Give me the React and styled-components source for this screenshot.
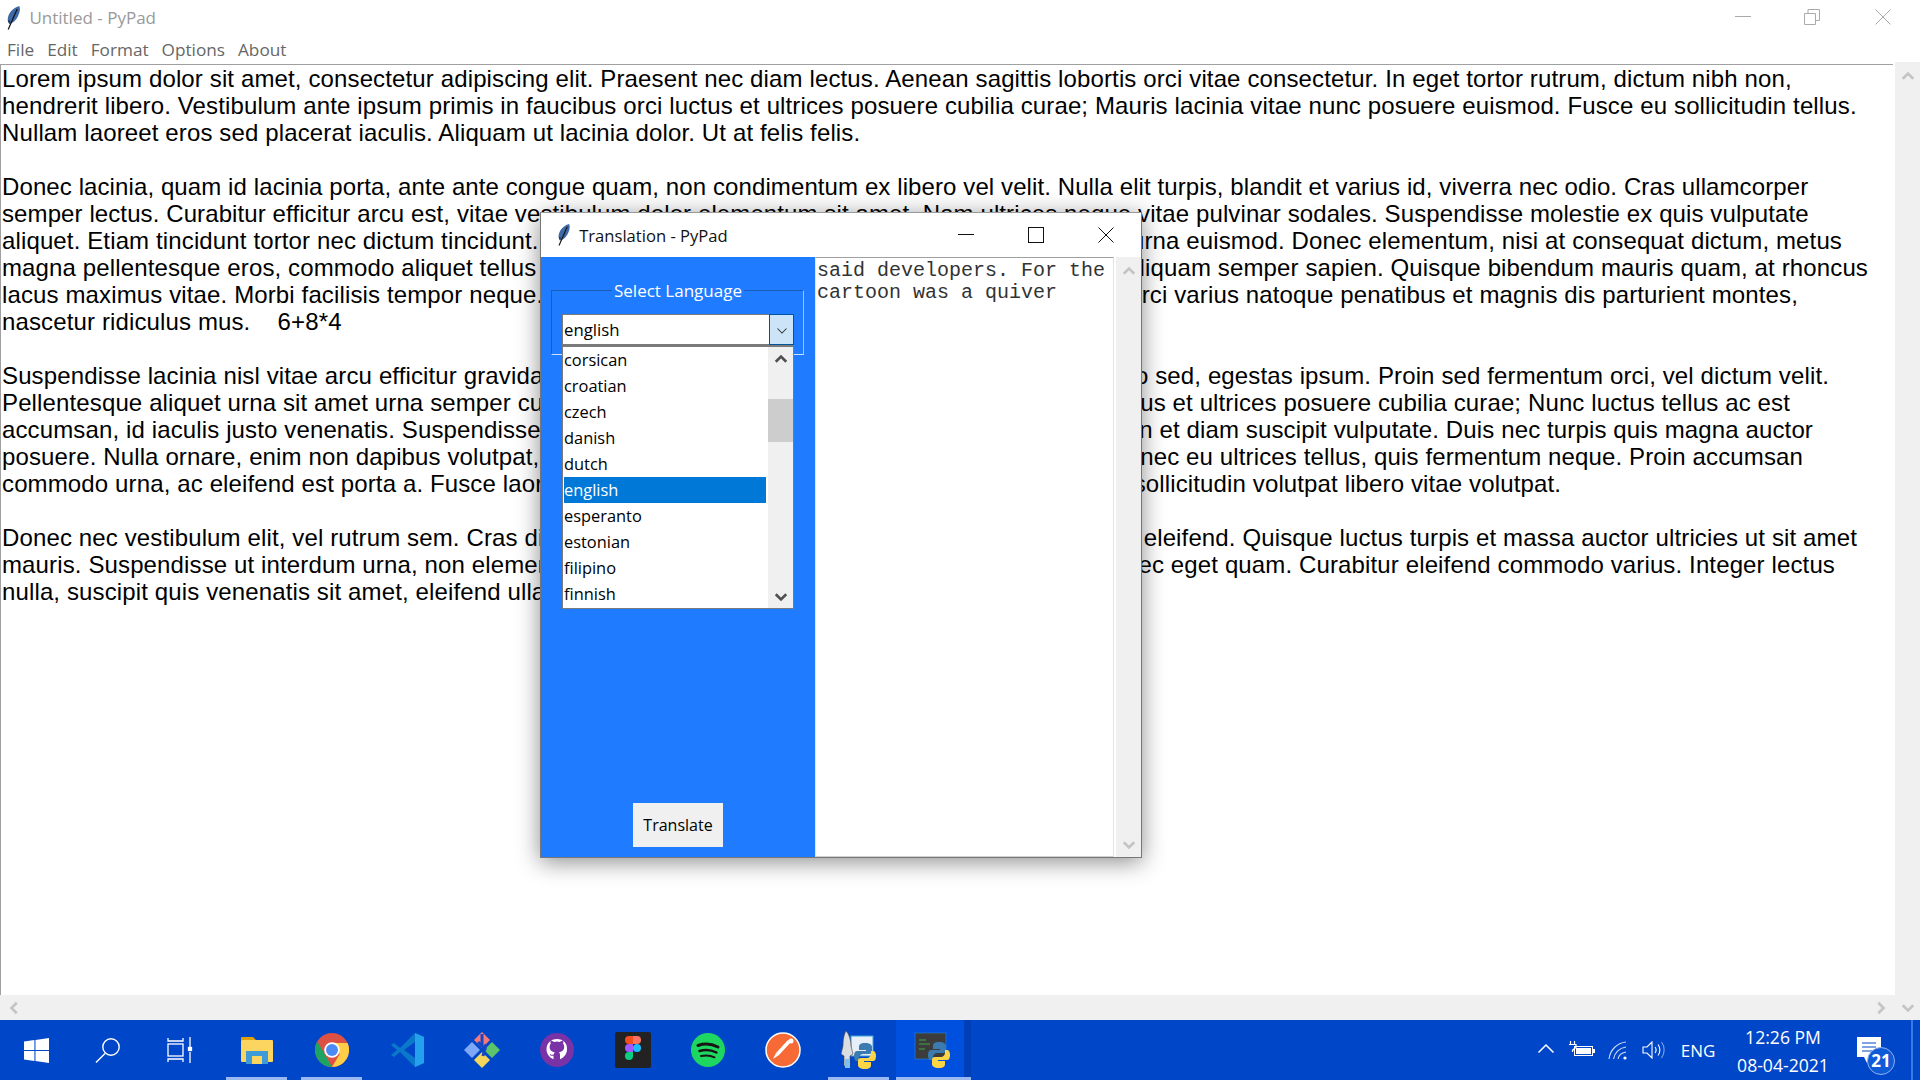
import React from 'react';
import styled, { createGlobalStyle } from 'styled-components';

const Global = createGlobalStyle`
  html, body { margin: 0; padding: 0; overflow: hidden; background: #fff; }
  * { box-sizing: border-box; }
`;

const UI = `"Open Sans", "Noto Sans", sans-serif`;

const Screen = styled.div`
  position: relative;
  width: 1920px;
  height: 1080px;
  display: flex;
  flex-direction: column;
  overflow: hidden;
  background: #fff;
`;

const TitleBar = styled.div`
  height: 33px;
  flex: none;
  display: flex;
  align-items: center;
  padding: 2px 0 0 6px;
  font: 17px ${UI};
  color: #999;
`;
const TitleText = styled.span`
  margin-left: ${p => p.$gap || 9}px;
  flex: 1;
`;
const WinControls = styled.div`
  display: flex;
  gap: 53px;
  margin-top: -2px;
  padding-right: 29px;
  color: #aaa;
  & > :nth-child(2) { margin-right: 2px; }
`;
const DialogControls = styled.div`
  display: flex;
  gap: 54px;
  padding-right: 27px;
  color: #111;
`;

const MenuBar = styled.div`
  height: 31px;
  flex: none;
  display: flex;
  align-items: center;
  gap: 13px;
  padding: 1px 0 0 7px;
  font: 17.2px ${UI};
  color: #666;
`;

const Workspace = styled.div`
  flex: 1;
  min-height: 0;
  display: flex;
`;
const EditorCol = styled.div`
  flex: 1;
  min-width: 0;
  display: flex;
  flex-direction: column;
`;
const Editor = styled.div`
  flex: 1;
  min-height: 0;
  margin-right: 2px;
  border-top: 1px solid #a0a0a0;
  border-left: 1px solid #a0a0a0;
  padding: 0 0 0 1px;
  font: 24px/27px "Liberation Sans", Arial, sans-serif;
  color: #000;
  white-space: pre;
  overflow: hidden;
`;
const Line = styled.div`
  height: 27px;
  display: flex;
  justify-content: space-between;
  letter-spacing: ${p => p.$ls || 0.13}px;
  width: ${p => (p.$end ? `${p.$end - 2}px` : 'auto')};
`;
const HScroll = styled.div`
  height: 25px;
  flex: none;
  background: #f0f0f0;
  display: flex;
  align-items: center;
  justify-content: space-between;
  padding: 0 8px;
  color: #c4c4c4;
`;
const VScroll = styled.div`
  width: 25px;
  flex: none;
  margin-top: ${p => p.$top || 0}px;
  background: #f0f0f0;
  display: flex;
  flex-direction: column;
  align-items: center;
  justify-content: space-between;
  padding: 8px 0 6px;
  color: #c4c4c4;
`;

const Taskbar = styled.div`
  height: 60px;
  flex: none;
  background: #0046c8;
  display: flex;
  align-items: stretch;
  color: #fff;
`;
const SysButton = styled.div`
  width: 72px;
  display: flex;
  align-items: center;
  justify-content: center;
`;
const AppList = styled.div`
  margin-left: 3px;
  display: flex;
`;
const AppTile = styled.div`
  position: relative;
  width: 75.2px;
  display: flex;
  align-items: center;
  justify-content: center;
  background: ${p => (p.$active ? '#0050e0' : 'transparent')};
  &::before {
    content: '';
    display: ${p => (p.$active ? 'block' : 'none')};
    position: absolute;
    top: 0;
    right: 0;
    bottom: 0;
    width: 7px;
    background: #003fb8;
  }
  &::after {
    content: '';
    display: ${p => (p.$open ? 'block' : 'none')};
    position: absolute;
    left: ${p => (p.$active ? 0 : 7)}px;
    right: ${p => (p.$active ? 0 : 7)}px;
    bottom: 0;
    height: 3px;
    background: #99b9f0;
  }
`;
const Tray = styled.div`
  margin-left: auto;
  display: flex;
  align-items: center;
  font: 17px ${UI};
  padding-right: 7px;
`;
const TrayIcon = styled.div`
  width: ${p => p.$w}px;
  display: flex;
  justify-content: center;
  align-items: center;
`;
const Clock = styled.div`
  width: 118px;
  margin-top: 2px;
  text-align: center;
  line-height: 28px;
  font-size: 17.6px;
`;
const Notify = styled.div`
  position: relative;
  width: 71px;
  height: 60px;
  padding: 2px 15px 0 0;
  display: flex;
  justify-content: center;
  align-items: center;
  border-right: 2px solid #3d78e0;
`;
const NotifyBadge = styled.span`
  position: absolute;
  left: 25px;
  top: 27px;
  width: 28px;
  height: 28px;
  border-radius: 50%;
  background: #0f5ad6;
  border: 1px solid #8fb2ef;
  font: 700 17px/26px ${UI};
  text-align: center;
`;

const Dialog = styled.div`
  position: absolute;
  left: 540px;
  top: 212px;
  width: 602px;
  height: 646px;
  display: flex;
  flex-direction: column;
  background: #fff;
  border: 1px solid #777;
  border-top-color: #999;
  box-shadow: 0 4px 22px rgba(0, 0, 0, 0.45);
`;
const DialogTitle = styled.div`
  height: 44px;
  flex: none;
  display: flex;
  align-items: center;
  padding-left: 16px;
  font: 16.6px ${UI};
  color: #111;
`;
const DialogBody = styled.div`
  flex: 1;
  min-height: 0;
  display: flex;
`;
const Sidebar = styled.div`
  width: 274px;
  flex: none;
  background: #1f7bff;
  padding: 33px 10px 10px;
  display: flex;
  flex-direction: column;
`;
const Group = styled.div`
  position: relative;
  height: 65px;
  width: 253px;
  border: 1px solid #1a5cba;
  border-bottom-color: #cfe2ff;
  border-right-color: #9cc3ff;
`;
const Legend = styled.span`
  position: absolute;
  left: 60px;
  top: -11px;
  padding: 0 2px;
  background: #1f7bff;
  color: #fff;
  font: 17px/22px ${UI};
  white-space: nowrap;
`;
const DropArea = styled.div`
  position: absolute;
  left: 10px;
  top: 23px;
  width: 232px;
`;
const Combo = styled.div`
  height: 32px;
  display: flex;
  background: #fff;
  border: 1px solid #7a7a7a;
  border-bottom-width: 2px;
  font: 16.8px/30px ${UI};
  color: #000;
  padding-left: 1px;
`;
const ComboValue = styled.span`
  flex: 1;
`;
const ComboButton = styled.span`
  width: 25px;
  background: #cce4f7;
  border: 1px solid #005499;
  margin: -1px -1px -1px 0;
  display: flex;
  align-items: center;
  justify-content: center;
  color: #333;
`;
const ListBox = styled.div`
  height: 263px;
  display: flex;
  background: #fff;
  border: 1px solid #7a7a7a;
  font: 16.4px/26px ${UI};
  color: #000;
`;
const Options = styled.div`
  flex: 1;
  padding-left: 1px;
`;
const OptionRow = styled.div`
  height: 26px;
  background: ${p => (p.$selected ? '#0078d7' : 'transparent')};
  color: ${p => (p.$selected ? '#fff' : '#000')};
`;
const ListScroll = styled.div`
  position: relative;
  width: 25px;
  flex: none;
  margin-left: 2px;
  background: #f0f0f0;
  display: flex;
  flex-direction: column;
  justify-content: space-between;
  align-items: center;
  padding: 6px 0 5px;
  color: #505050;
`;
const Thumb = styled.div`
  position: absolute;
  left: 0;
  right: 0;
  top: 52px;
  height: 43px;
  background: #cdcdcd;
`;
const TranslateButton = styled.button`
  margin: auto 0 0 82px;
  width: 90px;
  height: 44px;
  border: 0;
  background: #f0f0f0;
  color: #000;
  font: 16px ${UI};
`;
const TextPane = styled.div`
  flex: 1;
  border-top: 1px solid #a0a0a0;
  border-left: 1px solid #e6e6e6;
  border-right: 1px solid #e3e3e3;
  border-bottom: 1px solid #d0d0d0;
  margin-right: 2px;
  padding: 2px 0 0 1px;
  font: 20px/22px "Liberation Mono", "Courier New", monospace;
  color: #333;
  white-space: pre;
`;

const Chevron = ({ dir = 'up', size = 14, weight = 3 }) => {
  const pts = {
    up: '2,10 8,4 14,10',
    down: '2,6 8,12 14,6',
    left: '10,2 4,8 10,14',
    right: '6,2 12,8 6,14',
  }[dir];
  return (
    <svg width={size} height={size} viewBox="0 0 16 16">
      <polyline points={pts} fill="none" stroke="currentColor" strokeWidth={weight} />
    </svg>
  );
};

const Feather = ({ size = 22 }) => (
  <svg width={size * 0.6} height={size} viewBox="0 0 14 24">
    <path d="M13 0C6 2 1.500 8 1.500 14L3 18C8 17 11.500 12 13 7C14 4 14 2 13 0Z" fill="#3f6aa8" />
    <path d="M11 3 L2 23.500" stroke="#111" strokeWidth="1.200" />
    <path d="M4 15 L3 18 L1.500 14Z" fill="#1c2a3f" />
  </svg>
);

const Minimize = () => (
  <svg width="16" height="16" viewBox="0 0 16 16"><path d="M0 7.500H16" stroke="currentColor" fill="none" /></svg>
);
const Restore = () => (
  <svg width="16" height="16" viewBox="0 0 16 16">
    <path d="M.5 4.500h11v11H.5zM4 4.500V.5h11.500v11H11.500" stroke="currentColor" fill="none" />
  </svg>
);
const Maximize = () => (
  <svg width="16" height="16" viewBox="0 0 16 16"><rect x=".5" y=".5" width="15" height="15" stroke="currentColor" fill="none" /></svg>
);
const Close = () => (
  <svg width="16" height="16" viewBox="0 0 16 16"><path d="M.5.5l15 15M15.500.5l-15 15" stroke="currentColor" fill="none" /></svg>
);

const WindowsLogo = () => (
  <svg width="25" height="25" viewBox="0 0 24 24" fill="#fff">
    <path d="M0 3.400L10 2v9.400H0zM11 1.900L24 0v11.400H11zM0 12.500h10V22L0 20.600zM11 12.500h13V24l-13-1.900z" />
  </svg>
);
const SearchIcon = () => (
  <svg width="26" height="26" viewBox="0 0 26 26" fill="none" stroke="#fff" strokeWidth="1.400">
    <circle cx="16" cy="10" r="8.200" />
    <path d="M10 16.500L1 25.500" />
  </svg>
);
const TaskView = () => (
  <svg width="26" height="26" viewBox="0 0 26 26" fill="none" stroke="#fff" strokeWidth="1.300">
    <path d="M1 1v3h15V1M1 25v-3h15v3" />
    <rect x="1" y="7" width="15" height="12" />
    <path d="M23 0v10M23 15v11" />
    <rect x="21.500" y="10.500" width="3" height="3" fill="#fff" />
  </svg>
);
const ExplorerIcon = () => (
  <svg width="34" height="28" viewBox="0 0 34 28">
    <path d="M1 2a1 1 0 0 1 1-1h11l3 3H1z" fill="#e0a008" />
    <rect x="1" y="4" width="32" height="22" rx="1" fill="#fbd55f" />
    <rect x="6" y="15" width="22" height="13" fill="#3f9ad8" />
    <rect x="12" y="20" width="10" height="8" fill="#fbd55f" />
  </svg>
);
const ChromeIcon = () => (
  <svg width="34" height="34" viewBox="0 0 48 48">
    <circle cx="24" cy="24" r="24" fill="#dd5044" />
    <path d="M24 48A24 24 0 0 1 3.200 12L14 30.500 24 48z" fill="#1da462" />
    <path d="M24 48l11-18.500L24 14h22a24 24 0 0 1-22 34z" fill="#ffcd46" />
    <circle cx="24" cy="24" r="11" fill="#fff" />
    <circle cx="24" cy="24" r="8.500" fill="#4c8bf5" />
  </svg>
);
const VSCodeIcon = () => (
  <svg width="36" height="36" viewBox="0 0 36 36">
    <path d="M26 1l9 4v26l-9 4L11 20l-6 5-3-2 6-5-6-5 3-2 6 5z" fill="#0a79c9" />
    <path d="M26 1l9 4v26l-9 4z" fill="#24a0ed" />
    <path d="M26 10L15 18l11 8z" fill="#0046c8" />
  </svg>
);
const KrakenIcon = () => (
  <svg width="36" height="36" viewBox="0 0 36 36">
    <path d="M18 0l8 8-8 8-8-8z" fill="#f77a7a" />
    <path d="M8 10l8 8-8 8-8-8z" fill="#7fa9f7" />
    <path d="M28 10l8 8-8 8-8-8z" fill="#5cc46a" />
    <path d="M18 20l8 8-8 8-8-8z" fill="#f5d55a" />
    <path d="M18 2v13M14 10l8 8M22 12l-3 12" stroke="#1746c4" strokeWidth="3" fill="none" />
  </svg>
);
const GithubIcon = () => (
  <svg width="34" height="34" viewBox="0 0 34 34">
    <circle cx="17" cy="17" r="17" fill="#7a33a6" />
    <path d="M17 6c-6.300 0-10.500 4.500-10.500 10.300 0 4.600 3 8.500 7 9.900v-3.500c-2.800.6-3.500-1-3.800-2 2 1.500 3 1.400 4.100.5.200-1 .5-1.500 1-1.900-2.700-.4-5.200-1.600-5.200-5.500 0-1.200.4-2.200 1.100-3-.1-.3-.5-1.500.1-3 0 0 1-.3 3.200 1.200a11 11 0 0 1 5.800 0c2.200-1.500 3.200-1.200 3.200-1.200.6 1.500.2 2.700.1 3 .7.800 1.100 1.800 1.100 3 0 3.900-2.500 5.100-5.200 5.500.5.500 1 1.200 1 2.500v4.400c4-1.400 7-5.300 7-9.900C27.500 10.500 23.300 6 17 6z" fill="#fff" />
  </svg>
);
const FigmaIcon = () => (
  <svg width="36" height="36" viewBox="0 0 36 36">
    <rect width="36" height="36" rx="2" fill="#222" />
    <path d="M10 8a4 4 0 0 1 4-4h4v8h-4a4 4 0 0 1-4-4z" fill="#f24e1e" />
    <path d="M18 4h4a4 4 0 0 1 0 8h-4z" fill="#ff7262" />
    <path d="M10 16a4 4 0 0 1 4-4h4v8h-4a4 4 0 0 1-4-4z" fill="#a259ff" />
    <circle cx="22" cy="16" r="4" fill="#1abcfe" />
    <path d="M10 24a4 4 0 0 1 4-4h4v4a4 4 0 0 1-8 0z" fill="#0acf83" />
  </svg>
);
const SpotifyIcon = () => (
  <svg width="34" height="34" viewBox="0 0 34 34">
    <circle cx="17" cy="17" r="17" fill="#1ed760" />
    <g fill="none" stroke="#191414" strokeLinecap="round">
      <path d="M7 12.500c6-2 14-1.500 20 1.500" strokeWidth="3" />
      <path d="M8.500 18c5-1.500 12-1 17 1.500" strokeWidth="2.500" />
      <path d="M10 23c4.500-1 9.500-.7 13.500 1.300" strokeWidth="2" />
    </g>
  </svg>
);
const PostmanIcon = () => (
  <svg width="36" height="36" viewBox="0 0 36 36">
    <circle cx="18" cy="18" r="17" fill="#f76935" stroke="#fff" strokeWidth="1.500" />
    <path d="M8 27l6-4 12-13-3-2-12 13z" fill="#fff" />
    <circle cx="26" cy="9" r="2.500" fill="#fff" />
  </svg>
);
const PythonMark = ({ x = 0, y = 0 }) => (
  <g transform={`translate(${x} ${y})`}>
    <path d="M11 0c-5 0-6 2-6 4v3h7v1H3c-2 0-3 2-3 5s1 5 3 5h2v-3c0-2 2-4 4-4h6c2 0 3-1 3-3V4c0-2-2-4-7-4z" fill="#3b7bb0" />
    <path d="M11 26c5 0 6-2 6-4v-3h-7v-1h9c2 0 3-2 3-5s-1-5-3-5h-2v3c0 2-2 4-4 4H7c-2 0-3 1-3 3v4c0 2 2 4 7 4z" fill="#fdd545" />
  </g>
);
const RocketPy = () => (
  <svg width="38" height="38" viewBox="0 0 38 38">
    <rect x="12" y="5" width="22" height="20" fill="#e6eef8" stroke="#3aa0d8" />
    <path d="M7 0c3 3 5 9 5 15l2 8-3 2v10H5V25l-3-2 2-8C4 9 5 3 7 0z" fill="#d9dde2" stroke="#444" strokeWidth=".6" />
    <rect x="6" y="28" width="5" height="9" fill="#7ec0f0" />
    <PythonMark x="15" y="12" />
  </svg>
);
const IdlePy = () => (
  <svg width="38" height="38" viewBox="0 0 38 38">
    <rect x="1" y="2" width="31" height="26" fill="#3c3c3c" stroke="#2d88c8" strokeWidth=".6" />
    <path d="M5 9h7M5 13h11M5 18h6" stroke="#39a845" strokeWidth="1" />
    <PythonMark x="14" y="11" />
  </svg>
);

const BatteryIcon = () => (
  <svg width="26" height="18" viewBox="0 0 26 18" fill="none" stroke="#fff">
    <path d="M1.500 0v3M5.500 0v3M0 3.500h7v3L3.500 9V11M3.500 9H5" strokeWidth="1.200" />
    <rect x="5.500" y="5.500" width="18" height="9" stroke="#fff" />
    <rect x="7" y="7" width="15" height="6" fill="#fff" stroke="none" />
    <rect x="24" y="8" width="2" height="4" fill="#fff" stroke="none" />
  </svg>
);
const WifiIcon = () => (
  <svg width="20" height="19" viewBox="0 0 20 19" fill="none" stroke="#cfdcf5" strokeWidth="1.100">
    <path d="M1 18C2 9 9 2 18 1M5.500 18C6.500 12 11 7 18 6M10 18c.5-3 3-6 8-7" />
    <circle cx="17" cy="17" r="1.600" fill="#fff" stroke="none" />
  </svg>
);
const VolumeIcon = () => (
  <svg width="24" height="18" viewBox="0 0 24 18" fill="none" stroke="#fff" strokeWidth="1.100">
    <path d="M1 6h4l5-5v16l-5-5H1z" />
    <path d="M13 6c1.500 2 1.500 4 0 6M16 3.500c2.500 3 2.500 8 0 11" />
    <path d="M19.500 1c3.500 4.500 3.500 11.500 0 16" opacity=".5" />
  </svg>
);
const MessageIcon = () => (
  <svg width="24" height="28" viewBox="0 0 24 28">
    <path d="M0 0h24v20H13l-3 6-3-6H0z" fill="#fff" />
    <path d="M5 6h14M5 10h14M5 14h14" stroke="#0046c8" strokeWidth="1" />
  </svg>
);

const languages = ['corsican', 'croatian', 'czech', 'danish', 'dutch', 'english', 'esperanto', 'estonian', 'filipino', 'finnish'];

const App = () => (
  <Screen>
    <Global />
    <TitleBar>
      <Feather size={24} />
      <TitleText>Untitled - PyPad</TitleText>
      <WinControls>
        <Minimize />
        <Restore />
        <Close />
      </WinControls>
    </TitleBar>
    <MenuBar>
      <span>File</span>
      <span>Edit</span>
      <span>Format</span>
      <span>Options</span>
      <span>About</span>
    </MenuBar>
    <Workspace>
      <EditorCol>
        <Editor>
          <Line>Lorem ipsum dolor sit amet, consectetur adipiscing elit. Praesent nec diam lectus. Aenean sagittis lobortis orci vitae consectetur. In eget tortor rutrum, dictum nibh non,</Line>
          <Line>hendrerit libero. Vestibulum ante ipsum primis in faucibus orci luctus et ultrices posuere cubilia curae; Mauris lacinia vitae nunc posuere euismod. Fusce eu sollicitudin tellus.</Line>
          <Line>Nullam laoreet eros sed placerat iaculis. Aliquam ut lacinia dolor. Ut at felis felis.</Line>
          <Line />
          <Line $ls={0.1}>Donec lacinia, quam id lacinia porta, ante ante congue quam, non condimentum ex libero vel velit. Nulla elit turpis, blandit et varius id, viverra nec odio. Cras ullamcorper</Line>
          <Line $ls={0.1}>semper lectus. Curabitur efficitur arcu est, vitae vestibulum dolor elementum sit amet. Nam ultrices neque vitae pulvinar sodales. Suspendisse molestie ex quis vulputate</Line>
          <Line $end={1842}><span>aliquet. Etiam tincidunt tortor nec dictum tincidunt.</span><span>urna euismod. Donec elementum, nisi at consequat dictum, metus</span></Line>
          <Line $end={1868}><span>magna pellentesque eros, commodo aliquet tellus</span><span>aliquam semper sapien. Quisque bibendum mauris quam, at rhoncus</span></Line>
          <Line $end={1798}><span>lacus maximus vitae. Morbi facilisis tempor neque.</span><span>Orci varius natoque penatibus et magnis dis parturient montes,</span></Line>
          <Line>nascetur ridiculus mus.    6+8*4</Line>
          <Line />
          <Line $end={1829}><span>Suspendisse lacinia nisl vitae arcu efficitur gravida</span><span>justo sed, egestas ipsum. Proin sed fermentum orci, vel dictum velit.</span></Line>
          <Line $end={1790}><span>Pellentesque aliquet urna sit amet urna semper cursus</span><span>luctus et ultrices posuere cubilia curae; Nunc luctus tellus ac est</span></Line>
          <Line $end={1813}><span>accumsan, id iaculis justo venenatis. Suspendisse</span><span>in et diam suscipit vulputate. Duis nec turpis quis magna auctor</span></Line>
          <Line $end={1803}><span>posuere. Nulla ornare, enim non dapibus volutpat,</span><span>nec eu ultrices tellus, quis fermentum neque. Proin accumsan</span></Line>
          <Line $end={1561}><span>commodo urna, ac eleifend est porta a. Fusce laoreet</span><span>sollicitudin volutpat libero vitae volutpat.</span></Line>
          <Line />
          <Line $end={1857}><span>Donec nec vestibulum elit, vel rutrum sem. Cras dictum</span><span>eleifend. Quisque luctus turpis et massa auctor ultricies ut sit amet</span></Line>
          <Line $end={1835}><span>mauris. Suspendisse ut interdum urna, non elementum</span><span>nec eget quam. Curabitur eleifend commodo varius. Integer lectus</span></Line>
          <Line>nulla, suscipit quis venenatis sit amet, eleifend ullamcorper</Line>
        </Editor>
        <HScroll>
          <Chevron dir="left" />
          <Chevron dir="right" />
        </HScroll>
      </EditorCol>
      <VScroll $top={-2}>
        <Chevron dir="up" />
        <Chevron dir="down" />
      </VScroll>
    </Workspace>
    <Taskbar>
      <SysButton><WindowsLogo /></SysButton>
      <SysButton><SearchIcon /></SysButton>
      <SysButton><TaskView /></SysButton>
      <AppList>
        <AppTile $open><ExplorerIcon /></AppTile>
        <AppTile $open><ChromeIcon /></AppTile>
        <AppTile><VSCodeIcon /></AppTile>
        <AppTile><KrakenIcon /></AppTile>
        <AppTile><GithubIcon /></AppTile>
        <AppTile><FigmaIcon /></AppTile>
        <AppTile><SpotifyIcon /></AppTile>
        <AppTile><PostmanIcon /></AppTile>
        <AppTile $open><RocketPy /></AppTile>
        <AppTile $open $active><IdlePy /></AppTile>
      </AppList>
      <Tray>
        <TrayIcon $w={36}><Chevron dir="up" size={20} weight={1.2} /></TrayIcon>
        <TrayIcon $w={36}><BatteryIcon /></TrayIcon>
        <TrayIcon $w={36}><WifiIcon /></TrayIcon>
        <TrayIcon $w={36}><VolumeIcon /></TrayIcon>
        <TrayIcon $w={52}>ENG</TrayIcon>
        <Clock>12:26 PM<br />08-04-2021</Clock>
        <Notify>
          <MessageIcon />
          <NotifyBadge>21</NotifyBadge>
        </Notify>
      </Tray>
    </Taskbar>
    <Dialog>
      <DialogTitle>
        <Feather size={22} />
        <TitleText>Translation - PyPad</TitleText>
        <DialogControls>
          <Minimize />
          <Maximize />
          <Close />
        </DialogControls>
      </DialogTitle>
      <DialogBody>
        <Sidebar>
          <Group>
            <Legend>Select Language</Legend>
            <DropArea>
              <Combo>
                <ComboValue>english</ComboValue>
                <ComboButton><Chevron dir="down" size={12} weight={1.4} /></ComboButton>
              </Combo>
              <ListBox>
                <Options>
                  {languages.map(l => (
                    <OptionRow key={l} $selected={l === 'english'}>{l}</OptionRow>
                  ))}
                </Options>
                <ListScroll>
                  <Chevron dir="up" />
                  <Thumb />
                  <Chevron dir="down" />
                </ListScroll>
              </ListBox>
            </DropArea>
          </Group>
          <TranslateButton>Translate</TranslateButton>
        </Sidebar>
        <TextPane>{'said developers. For the\ncartoon was a quiver'}</TextPane>
        <VScroll>
          <Chevron dir="up" />
          <Chevron dir="down" />
        </VScroll>
      </DialogBody>
    </Dialog>
  </Screen>
);

export default App;
